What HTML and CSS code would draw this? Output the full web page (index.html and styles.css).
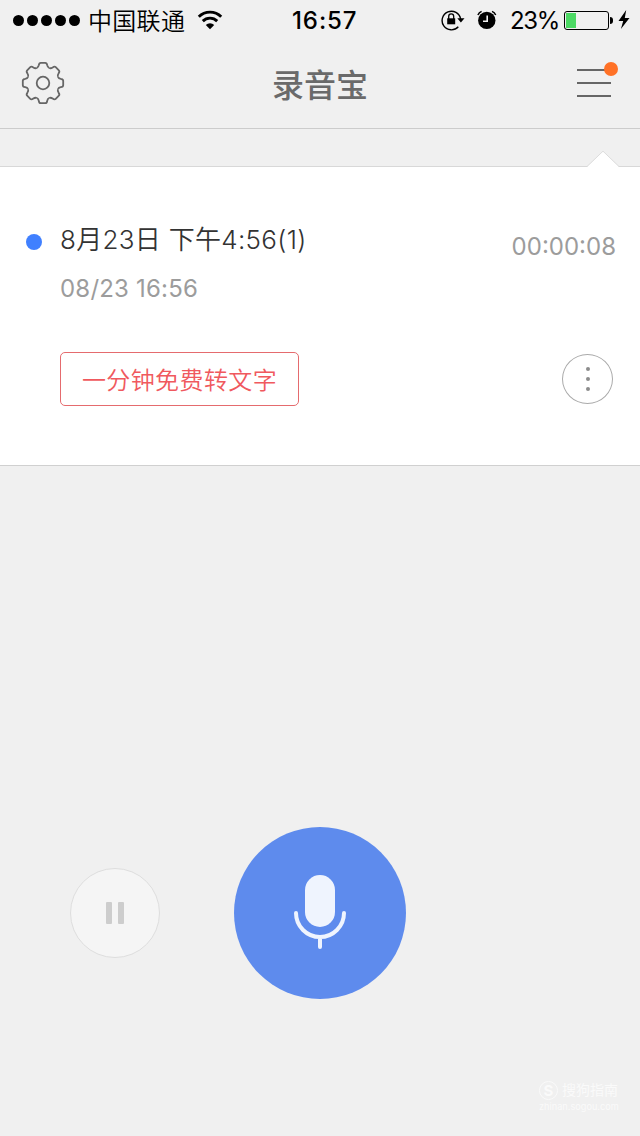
FILE: index.html
```html
<!DOCTYPE html>
<html lang="zh-CN">
<head>
<meta charset="utf-8">
<title>录音宝</title>
<link rel="stylesheet" href="styles.css">
</head>
<body>
<div class="status">
  <div class="carrier">
    <div class="signal"><i></i><i></i><i></i><i></i><i></i></div>
    <span class="operator">中国联通</span>
    <svg class="wifi" width="26" height="20" viewBox="0 0 26 20" fill="none" stroke="#000" stroke-width="2.9">
      <path d="M1.8 6.8a15.8 15.8 0 0 1 22.4 0"/>
      <path d="M5.8 11.1a10.2 10.2 0 0 1 14.4 0"/>
      <path d="M13 19.2L8.8 15a6 6 0 0 1 8.4 0z" fill="#000" stroke="none"/>
    </svg>
  </div>
  <span class="clock">16:57</span>
  <div class="indicators">
    <svg class="lock" width="24" height="22" viewBox="0 0 24 22">
      <path d="M17.3 17.8A9.3 9.3 0 1 1 19.6 10" fill="none" stroke="#000" stroke-width="1.4"/>
      <path d="M16.3 9.3h7.2l-3.6 4.2z"/>
      <rect x="6.2" y="9.3" width="8" height="6"/>
      <path d="M7.7 10V7.4a2.5 2.5 0 0 1 5 0V10" fill="none" stroke="#000" stroke-width="1.3"/>
    </svg>
    <svg class="alarm" width="20" height="20" viewBox="0 0 20 20">
      <circle cx="9.8" cy="10.4" r="8.7"/>
      <path d="M.9 5A7 7 0 0 1 4.6 1.4M15 1.4A7 7 0 0 1 18.7 5" fill="none" stroke="#000" stroke-width="1.5"/>
      <path d="M10.2 5.5v5.8H6" fill="none" stroke="#f0f0f0" stroke-width="1.6"/>
    </svg>
    <span class="percent">23%</span>
    <div class="battery"><i></i></div>
    <i class="battery-tip"></i>
    <svg class="bolt" width="12" height="20" viewBox="0 0 12 20"><path d="M8.2 0L.5 11h4.7L2.9 19 11.5 8.1H6.8z"/></svg>
  </div>
</div>
<header class="header">
  <svg class="gear" width="44" height="44" viewBox="-22 -22 44 44" fill="none" stroke="#666" stroke-width="1.8">
    <defs><path id="tooth" d="M-6.2-14.97C-4.8-15.6-4.5-16.2-4.2-17.8C-3.9-19.8-3.4-20.2-2.2-20.2H2.2C3.4-20.2 3.9-19.8 4.2-17.8C4.5-16.2 4.8-15.6 6.2-14.97"/></defs>
    <use href="#tooth"/><use href="#tooth" transform="rotate(45)"/><use href="#tooth" transform="rotate(90)"/><use href="#tooth" transform="rotate(135)"/><use href="#tooth" transform="rotate(180)"/><use href="#tooth" transform="rotate(225)"/><use href="#tooth" transform="rotate(270)"/><use href="#tooth" transform="rotate(315)"/>
    <circle r="6.3"/>
  </svg>
  <h1 class="title">录音宝</h1>
  <svg class="menu" width="42" height="38" viewBox="0 0 42 38">
    <path d="M0 9h34M0 22h34M0 35h34" stroke="#666" stroke-width="2"/>
    <circle cx="34" cy="8" r="7" fill="#ff7126"/>
  </svg>
</header>
<main class="card">
  <svg class="pointer" width="32" height="16" viewBox="0 0 32 16"><path d="M0 16L16 .2 32 16z" fill="#fff"/><path d="M0 15.5L16 .2l16 15.3" fill="none" stroke="#dcdcdc"/></svg>
  <i class="unread"></i>
  <div class="info">
    <div class="name">8月23日 下午4:56(1)</div>
    <div class="date">08/23 16:56</div>
    <button class="convert">一分钟免费转文字</button>
  </div>
  <div class="side">
    <span class="duration">00:00:08</span>
    <div class="more"><i></i><i></i><i></i></div>
  </div>
</main>
<section class="recorder">
  <div class="pause"><i></i><i></i></div>
  <div class="record">
    <svg width="56" height="76" viewBox="0 0 56 76">
      <rect x="13" y="0" width="30" height="52" rx="15" fill="#eff4fe"/>
      <path d="M4 38a24 24 0 0 0 48 0M28 62v10" fill="none" stroke="#eff4fe" stroke-width="4" stroke-linecap="round"/>
    </svg>
  </div>
</section>
<footer class="watermark">
  <div class="brand"><span class="mark">S</span><span>搜狗指南</span></div>
  <div class="site">zhinan.sogou.com</div>
</footer>
</body>
</html>
```
FILE: styles.css
```css
* { box-sizing: border-box; }
body {
  margin: 0;
  width: 640px;
  height: 1136px;
  display: flex;
  flex-direction: column;
  overflow: hidden;
  background: #f0f0f0;
  font-family: Inter, "Noto Sans CJK SC", sans-serif;
  color: #333;
}
i, svg { display: block; flex: none; }
span, .name, .date { white-space: nowrap; }

.status {
  height: 40px;
  flex: none;
  display: grid;
  grid-template-columns: 292px 140px 1fr;
  align-items: center;
  color: #000;
}
.carrier { display: flex; align-items: center; padding-left: 13px; }
.signal { display: flex; gap: 3px; }
.signal i { width: 11px; height: 11px; border-radius: 50%; background: #000; }
.operator { font-size: 24px; line-height: 36px; padding-top: 4px; margin-left: 8px; letter-spacing: .3px; font-weight: 350; }
.wifi { margin-left: 12px; }
.clock { font-size: 24px; line-height: 38px; padding-top: 2px; font-weight: 500; letter-spacing: .9px; }
.indicators { display: flex; align-items: center; padding-left: 9px; }
.alarm { margin-left: 12px; }
.percent { font-size: 24px; line-height: 38px; padding-top: 2px; width: 48px; margin-left: 13px; letter-spacing: -1.4px; }
.battery {
  width: 45px;
  height: 19px;
  margin-left: 6px;
  padding: 1px;
  border: 1px solid #000;
  border-radius: 3px;
}
.battery i { width: 10px; height: 15px; background: #4cd964; }
.battery-tip { width: 3px; height: 7px; margin-left: 1px; background: #000; border-radius: 0 3px 3px 0; }
.bolt { margin-left: 5px; }

.header {
  height: 89px;
  flex: none;
  display: grid;
  grid-template-columns: 200px 240px 200px;
  align-items: start;
  border-bottom: 1px solid #ccc;
}
.gear { margin: 21px 0 0 21px; }
.title {
  margin: 23px 0 0;
  text-align: center;
  font-size: 32px;
  line-height: 46px;
  font-weight: 500;
  color: #6a6a6a;
}
.menu { margin: 21px 0 0 137px; }

.card {
  position: relative;
  flex: none;
  height: 300px;
  margin-top: 37px;
  display: flex;
  background: #fff;
  border-top: 1px solid #d8d8d8;
  border-bottom: 1px solid #d0d0d0;
}
.pointer { position: absolute; left: 587px; top: -16px; }
.unread { width: 16px; height: 16px; margin: 67px 0 0 26px; border-radius: 50%; background: #4080ff; }
.info { flex: 1; padding: 55px 0 0 18px; }
.name { font-size: 26px; line-height: 36px; font-weight: 350; letter-spacing: .3px; }
.date { margin-top: 13px; font-size: 24px; line-height: 36px; letter-spacing: .2px; color: #9c9c9c; }
.convert {
  display: block;
  width: 239px;
  height: 54px;
  margin-top: 45px;
  padding: 0 0 2px;
  border: 1px solid #e56b6e;
  border-radius: 5px;
  background: none;
  color: #f0595e;
  font-family: inherit;
  font-size: 24px;
  font-weight: 350;
  letter-spacing: .4px;
}
.side { width: 140px; display: flex; flex-direction: column; align-items: flex-end; }
.duration { margin: 62px 24px 0 0; font-size: 24px; line-height: 36px; color: #9c9c9c; }
.more {
  width: 51px;
  height: 50px;
  margin: 89px 27px 0 0;
  display: flex;
  flex-direction: column;
  align-items: center;
  justify-content: center;
  gap: 6px;
  border: 1px solid #aaa;
  border-radius: 50%;
}
.more i { width: 4px; height: 4px; border-radius: 50%; background: #8c8c8c; }

.recorder {
  flex: none;
  display: flex;
  align-items: center;
  gap: 74px;
  margin-top: 361px;
  padding-left: 70px;
}
.pause {
  width: 90px;
  height: 90px;
  display: flex;
  align-items: center;
  justify-content: center;
  gap: 6px;
  border: 1px solid #dedede;
  border-radius: 50%;
  background: #f5f5f5;
}
.pause i { width: 6px; height: 22px; border-radius: 1px; background: #cdcdcd; }
.record {
  width: 172px;
  height: 172px;
  display: flex;
  align-items: center;
  justify-content: center;
  border-radius: 50%;
  background: #5e8bed;
}

.watermark { align-self: flex-end; width: 101px; margin-top: 80px; color: #fafafa; }
.brand { display: flex; align-items: center; gap: 4px; font-size: 14px; line-height: 22px; }
.mark {
  width: 19px;
  height: 19px;
  border: 1px solid #fafafa;
  border-radius: 50%;
  text-align: center;
  font-size: 15px;
  line-height: 17px;
  font-weight: 700;
}
.site { font-size: 9.2px; line-height: 12px; }
```
